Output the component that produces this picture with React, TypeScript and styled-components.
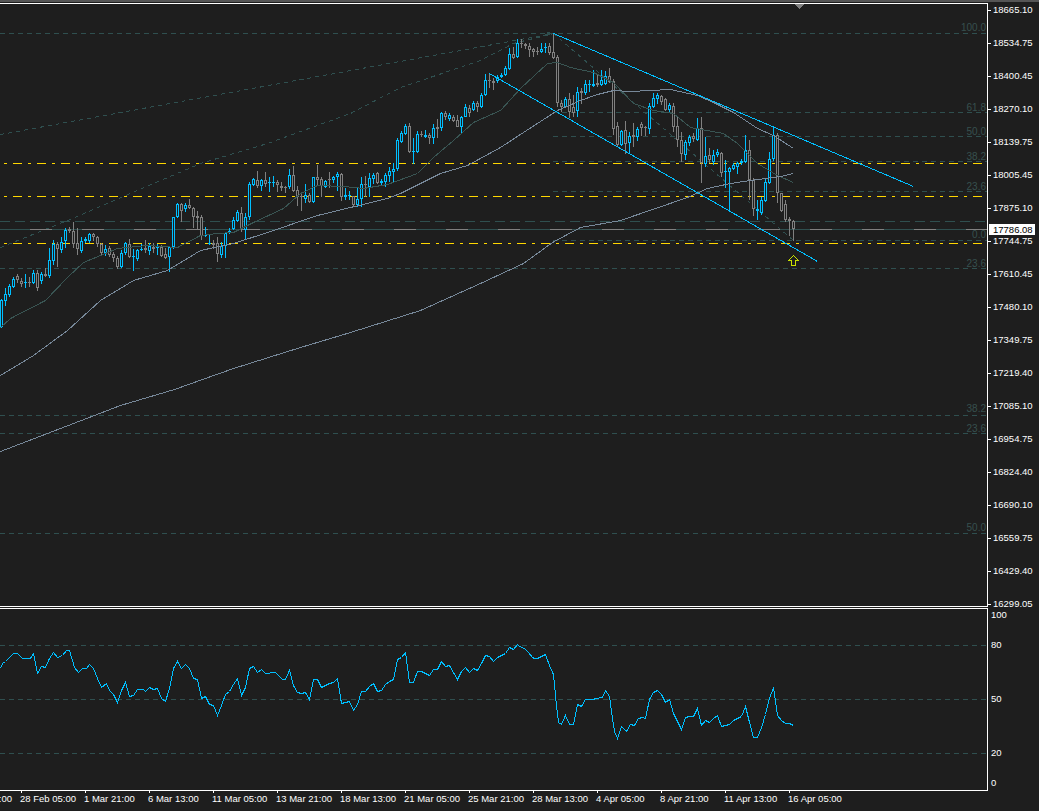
import styled, { createGlobalStyle } from 'styled-components';

const BG = '#1e1e1e';
const BLUE = '#00bfff';
const GRAY = '#808080';
const SLATE = '#778899';
const TEAL = '#2f4f4f';
const TEAL_MA = '#395553';
const YELLOW = '#ffd700';

type Candle = { x: number; up: boolean; top: number; bot: number; hi: number; lo: number };
type Row = [number, number, number, number, number];

// values read at 3x off the chart: [up, top, bottom, high, low]
const part1: Row[] = [
  [1,600,682,598,684],[1,583,602,565,618],[1,558,585,552,590],[1,538,560,530,565],[0,528,540,522,548],
  [0,542,552,535,560],[1,547,550,522,565],[0,547,549,530,562],[1,520,548,510,552],[0,518,565,510,573],
  [1,522,542,515,552],[0,522,527,505,530],[1,480,527,445,533],[1,432,482,420,495],[0,432,448,425,500],
  [1,427,450,410,458],[1,390,422,385,445],[0,388,392,382,400],[0,393,433,366,445],[0,430,446,385,465],
  [1,422,454,410,458],[1,418,422,412,430],[1,403,422,400,430],[0,403,412,400,422],[0,412,432,408,440],
  [0,432,458,428,465],[1,448,458,435,468],[0,445,465,438,470],[0,462,475,455,485],[0,475,500,468,507],
  [1,460,500,450,505],[1,430,460,425,465],[0,432,472,418,475],[1,468,471,448,512],[1,450,476,448,482],
  [1,447,450,432,453],[0,445,450,420,460],[1,438,452,430,466],[0,440,446,428,460],[1,442,445,432,465],
  [0,442,468,435,472],[0,463,473,445,477],[1,442,472,438,515],[1,352,442,350,447],[1,313,352,310,355],
  [0,313,332,310,365],[1,316,328,310,335],[0,316,325,298,326],[0,325,350,320,385],[0,349,355,333,388],
  [0,352,408,345,420],[1,404,408,382,412],[1,428,433,405,435],[0,428,434,420,448],[0,430,463,412,485],
  [1,438,464,425,473],[1,400,438,395,473],[1,392,400,385,403],[1,360,388,350,390],[1,337,362,330,365],
];
const part2: Row[] = [
  [0,460,510,442,515],[1,472,510,460,540],[1,372,472,365,480],[1,358,375,355,378],[0,360,378,333,385],
  [1,360,378,358,392],[0,360,372,335,382],[1,367,370,350,395],[1,366,368,347,380],[0,367,375,360,395],
  [0,378,384,365,392],[0,381,383,378,400],[1,346,382,328,388],[0,346,392,318,395],[0,390,410,378,438],
  [0,408,411,398,452],[1,406,418,372,430],[0,405,425,398,428],[1,352,425,350,428],[0,352,360,315,378],
  [0,358,378,350,410],[1,364,380,360,384],[0,358,360,337,384],[1,352,360,348,370],[1,342,352,335,392],
  [0,342,410,338,422],[1,406,412,385,420],[1,406,408,392,420],[0,408,435,408,442],[1,418,436,380,440],
  [1,373,418,350,440],[0,372,376,348,412],[1,355,380,340,412],[1,345,358,338,372],[0,340,368,335,372],
  [1,363,370,358,375],[1,345,365,338,382],[1,334,347,320,365],[1,328,335,310,365],[1,240,328,235,332],
  [1,220,245,212,250],[1,198,222,192,225],[0,198,275,190,280],[1,272,275,235,312],[1,222,275,212,280],
  [0,222,226,212,232],[1,226,232,210,235],[0,226,233,218,252],[1,205,233,192,252],[0,202,208,178,234],
  [1,160,205,155,212],[0,160,172,152,180],[1,165,177,160,182],[0,170,182,165,186],[0,180,200,165,202],
  [1,170,200,168,218],[1,142,170,132,172],[0,143,158,135,172],[1,130,150,122,152],[0,130,140,122,155],
];
const part3: Row[] = [
  [1,286,320,280,325],[1,240,286,222,288],[0,240,242,218,265],[0,242,250,235,270],[1,230,242,225,248],
  [1,225,232,218,235],[1,205,225,198,228],[1,162,207,143,210],[0,162,175,140,178],[1,130,172,118,175],
  [0,130,133,118,145],[0,133,138,128,148],[0,138,150,130,172],[0,148,155,143,170],[0,153,156,142,165],
  [1,148,156,130,160],[1,140,143,130,158],[0,138,160,130,165],[0,157,174,98,178],[0,172,308,165,322],
  [0,308,322,300,335],[1,296,322,292,325],[0,298,335,280,355],[0,322,338,285,350],[1,275,332,262,352],
  [0,272,280,265,312],[1,252,280,240,285],[1,252,255,240,275],[1,252,257,210,262],[0,250,254,225,262],
  [1,240,256,210,258],[1,228,252,212,255],[0,228,245,205,250],[0,243,388,238,405],[0,378,436,365,442],
  [1,394,436,390,438],[0,390,432,362,462],[1,407,430,395,460],[0,405,410,368,440],[1,388,412,380,422],
  [0,372,385,365,408],[0,382,384,378,408],[1,318,386,310,402],[1,294,322,280,325],[1,286,297,280,312],
  [0,287,306,285,315],[0,298,330,295,332],[1,315,330,310,335],[0,318,380,310,395],[0,378,420,350,440],
  [0,420,462,395,485],[1,425,465,420,480],[1,412,428,405,438],[0,408,418,400,425],[1,385,420,355,424],
  [0,384,490,350,548],[1,468,492,412,500],[0,466,480,445,488],[1,465,486,450,495],[1,456,466,448,470],
  [0,458,518,455,530],[1,514,517,480,565],[1,505,515,500,635],[1,495,507,488,510],[1,490,500,485,522],
  [1,482,490,478,495],[1,450,485,405,490],[0,450,540,420,600],[0,540,628,535,648],[1,628,632,600,660],
  [1,600,640,590,645],[1,547,602,535,605],[1,478,548,455,552],[1,405,478,380,482],[0,404,580,400,608],
  [0,580,632,578,635],[0,613,660,600,665],[0,658,662,652,708],[0,664,688,660,722],
];

const toPx = (offset: number, rows: Row[]) =>
  rows.map(([up, top, bot, hi, lo]) => ({
    up: up === 1,
    top: Math.round(offset + top / 3),
    bot: Math.round(offset + bot / 3),
    hi: Math.round(offset + hi / 3),
    lo: Math.round(offset + lo / 3),
  }));

const candles: Candle[] = [...toPx(100, part1), ...toPx(60, part2), ...toPx(0, part3)].map((c, i) => ({
  ...c,
  x: 1 + i * 4,
}));

const pts = (list: number[][]) => list.map(([x, y]) => `${x + 0.5},${y + 0.5}`).join(' ');

const ma200 = [[0,451],[60,428],[120,405],[174,389],[233,368],[300,347],[350,332],[420,310],[480,283],[523,263],[552,242],[580,227],[620,220],[687,197],[707,188],[730,183],[750,180],[780,176],[793,173]];
const ma50 = [[0,375],[33,355],[67,330],[100,300],[133,280],[167,270],[200,250],[233,243],[267,232],[317,215],[350,207],[387,198],[400,193],[440,173],[467,165],[500,147],[523,132],[557,110],[580,100],[597,94],[613,90],[630,91],[670,89],[697,95],[713,102],[733,112],[757,128],[773,135],[793,148]];
const ma20 = [[0,327],[10,318],[45,300],[67,277],[83,262],[117,248],[147,245],[177,247],[200,235],[217,233],[233,232],[253,222],[283,208],[300,193],[317,185],[343,186],[363,188],[387,184],[417,173],[433,157],[453,140],[473,122],[500,110],[520,88],[547,63],[557,62],[570,67],[593,72],[613,82],[633,103],[653,110],[673,113],[690,127],[723,133],[737,143],[757,163],[777,175],[793,182]];

const rsiLeft = [[0,205],[6,188],[15,182],[30,168],[40,160],[52,160],[65,175],[90,175],[100,160],[112,220],[122,197],[136,202],[148,175],[160,157],[172,172],[185,165],[197,150],[208,150],[222,200],[233,217],[245,203],[257,203],[268,193],[280,205],[292,235],[304,260],[318,250],[328,270],[340,282],[352,307],[364,270],[376,247],[388,288],[400,285],[412,268],[430,268],[436,272],[448,260],[460,267],[472,265],[484,295],[496,303],[508,265],[520,205],[532,182],[544,203],[556,193],[568,205],[580,235],[592,238],[604,295],[616,288],[628,312],[640,316],[652,344],[664,315],[676,282],[688,272],[700,253],[712,235],[724,285],[736,260],[748,203],[760,198],[772,217],[784,208],[796,220],[825,217],[845,236],[856,236],[868,210],[880,255],[892,275],[904,280],[916,277],[928,297],[940,238],[952,238],[964,262],[976,255],[988,250],[1000,245],[1012,235],[1024,310],[1036,306],[1046,303],[1060,330],[1072,312],[1084,272],[1096,273],[1108,258],[1120,248],[1132,272],[1144,270],[1156,252],[1168,242],[1180,238],[1192,178],[1204,170],[1216,157],[1228,245],[1240,245],[1252,214],[1264,214],[1288,224],[1300,208],[1312,208],[1324,182],[1336,198],[1348,196],[1360,215],[1372,238],[1384,214],[1396,200],[1408,217],[1420,203],[1432,210],[1444,188],[1456,165],[1468,168],[1480,182],[1492,170],[1504,165],[1516,158],[1528,140],[1540,147],[1552,133]];
const rsiRight = [[0,137],[14,143],[26,155],[38,170],[44,175],[55,175],[78,162],[90,195],[102,222],[110,315],[116,365],[126,372],[138,346],[150,372],[162,372],[174,313],[186,318],[198,296],[220,296],[230,293],[248,291],[258,270],[270,287],[278,355],[285,393],[295,415],[307,377],[320,393],[332,372],[344,376],[356,353],[368,351],[378,355],[390,298],[402,275],[414,270],[426,282],[438,307],[450,296],[462,340],[474,362],[486,388],[498,352],[510,347],[522,347],[535,323],[547,375],[559,361],[571,367],[583,355],[595,346],[607,379],[619,376],[631,371],[643,360],[655,353],[667,347],[679,318],[691,365],[703,412],[715,410],[727,380],[739,342],[751,295],[763,262],[775,345],[787,360],[799,369],[811,370],[821,376]];
const rsi = [
  ...rsiLeft.map(([x, y]) => [Math.round(x / 3), Math.round(600 + y / 3)]),
  ...rsiRight.map(([x, y]) => [Math.round(519 + x / 3), Math.round(600 + y / 3)]),
];

const fibRows = [
  { y: 33, from: 0 }, { y: 112, from: 553 }, { y: 136, from: 553 }, { y: 161, from: 553 }, { y: 191, from: 553 },
  { y: 240, from: 553 }, { y: 268, from: 0 }, { y: 415, from: 0 }, { y: 433, from: 0 }, { y: 533, from: 0 },
];
const fibTexts = [
  { y: 31, t: '100.0' }, { y: 111, t: '61.8' }, { y: 135, t: '50.0' }, { y: 160, t: '38.2' }, { y: 190, t: '23.6' },
  { y: 238, t: '0.0' }, { y: 267, t: '23.6' }, { y: 412, t: '38.2' }, { y: 432, t: '23.6' }, { y: 531, t: '50.0' },
];
const prices = [
  '18665.10','18534.75','18400.45','18270.10','18139.75','18005.45','17875.10','17744.75','17610.45','17480.10',
  '17349.75','17219.40','17085.10','16954.75','16824.40','16690.10','16559.75','16429.40','16299.05',
];
const rsiScale = [
  { t: '100', gap: 0 }, { t: '80', gap: 20 }, { t: '50', gap: 44 }, { t: '20', gap: 44 }, { t: '0', gap: 20 },
];
const dates = [
  '26 Feb 13:00','28 Feb 05:00','1 Mar 21:00','6 Mar 13:00','11 Mar 05:00','13 Mar 21:00','18 Mar 13:00',
  '21 Mar 05:00','25 Mar 21:00','28 Mar 13:00','4 Apr 05:00','8 Apr 21:00','11 Apr 13:00','16 Apr 05:00',
];

const Page = createGlobalStyle`
  html, body { margin: 0; padding: 0; background: ${BG}; }
  body { font-family: "Liberation Sans", Arial, sans-serif; }
`;
const Terminal = styled.div`
  width: 1039px;
  height: 811px;
  display: grid;
  grid-template-columns: 988px 51px;
  grid-template-rows: 604px 184px 20px;
  border-top: 2px solid #555;
  padding-top: 1px;
  box-sizing: border-box;
  background: ${BG};
  overflow: hidden;
  color: #fff;
  font-size: 9.5px;
`;
const MainPane = styled.div`
  border: 1px solid #fff;
  border-left: 0;
  height: 604px;
  box-sizing: border-box;
`;
const SubPane = styled.div`
  border: 1px solid #fff;
  border-left: 0;
  margin-top: 1px;
  height: 183px;
  box-sizing: border-box;
`;
const Plot = styled.svg`
  display: block;
  shape-rendering: crispEdges;
`;
const PriceAxis = styled.div`
  position: relative;
  height: 606px;
  padding: 2px 0 0 5px;
  box-sizing: border-box;
  display: flex;
  flex-direction: column;
  justify-content: space-between;
`;
const ScaleAxis = styled.div`
  padding: 3px 0 0 3px;
  display: flex;
  flex-direction: column;
`;
const AxisLabel = styled.div<{ $gap?: number; $tick?: boolean }>`
  position: relative;
  height: 10px;
  line-height: 10px;
  margin-top: ${(p) => p.$gap ?? 0}px;
  white-space: nowrap;
  &::before {
    content: ${(p) => (p.$tick === false ? 'none' : "''")};
    position: absolute;
    left: -5px;
    top: 5px;
    width: 3px;
    height: 1px;
    background: #fff;
  }
`;
const LastPrice = styled.div`
  position: absolute;
  left: 1px;
  top: 221px;
  width: 46px;
  height: 11px;
  padding-left: 4px;
  box-sizing: border-box;
  line-height: 11px;
  background: #fff;
  color: #000;
`;
const TimeBar = styled.div`
  grid-column: 1 / -1;
  overflow: hidden;
`;
const TimeRow = styled.div`
  display: flex;
  margin-left: -44px;
`;
const TimeCell = styled.div`
  position: relative;
  flex: 0 0 64px;
  line-height: 16px;
  white-space: nowrap;
  &::before {
    content: '';
    position: absolute;
    left: 1px;
    top: -1px;
    width: 1px;
    height: 3px;
    background: #fff;
  }
`;
const Rule = styled.line<{ $color: string; $dash?: string }>`
  stroke: ${(p) => p.$color};
  stroke-width: 1;
  stroke-dasharray: ${(p) => p.$dash ?? 'none'};
`;
const Trace = styled.polyline<{ $color: string; $dash?: string }>`
  fill: none;
  stroke: ${(p) => p.$color};
  stroke-width: 1;
  stroke-dasharray: ${(p) => p.$dash ?? 'none'};
`;
const FibText = styled.text`
  font-family: "Liberation Sans", Arial, sans-serif;
  font-size: 10px;
  fill: #37504e;
  text-anchor: end;
`;

function CandleMark({ c }: { c: Candle }) {
  const color = c.up ? BLUE : GRAY;
  const h = Math.max(c.bot - c.top, 1);
  return (
    <g>
      <rect x={c.x} y={c.hi} width={1} height={c.lo - c.hi} fill={color} />
      <rect x={c.x - 1} y={c.top} width={3} height={h} fill={color} />
      {h >= 3 && <rect x={c.x} y={c.top + 1} width={1} height={h - 2} fill={BG} />}
    </g>
  );
}

function PriceChart() {
  return (
    <Plot width={987} height={602} viewBox="0 4 987 602">
      {fibRows.map((r) => (
        <Rule key={r.y} x1={r.from} x2={987} y1={r.y + 0.5} y2={r.y + 0.5} $color={TEAL} $dash="5 4" />
      ))}
      <Rule x1={0} x2={987} y1={221.5} y2={221.5} $color={TEAL} $dash="10 5" />
      <Trace points={pts([[0,134],[553,33]])} $color={TEAL} $dash="4 4" />
      <Trace points={pts([[0,247],[67,220],[200,163],[267,143],[350,113],[400,87],[480,60],[513,43],[553,33]])} $color={TEAL} $dash="4 4" />
      <Trace points={pts([[553,33],[793,240]])} $color={TEAL} $dash="4 4" />
      <rect x={547} y={32} width={3} height={3} fill={TEAL} />
      {fibTexts.map((f) => (
        <FibText key={f.y} x={986} y={f.y}>
          {f.t}
        </FibText>
      ))}
      {[163, 196, 243].map((y) => (
        <Rule key={y} x1={4} x2={983} y1={y + 0.5} y2={y + 0.5} $color={YELLOW} $dash="3 6 9 6" />
      ))}
      <Rule x1={0} x2={987} y1={229.5} y2={229.5} $color={GRAY} />
      <Rule x1={0} x2={987} y1={229.5} y2={229.5} $color={TEAL} $dash="30 22" />
      {candles.map((c) => (
        <CandleMark key={c.x} c={c} />
      ))}
      <Trace points={pts(ma20)} $color={TEAL_MA} />
      <Trace points={pts(ma50)} $color={SLATE} />
      <Trace points={pts(ma200)} $color={SLATE} />
      <Trace points={pts([[553,33],[913,186]])} $color={BLUE} />
      <Trace points={pts([[489,73],[817,261]])} $color={BLUE} />
      <polygon
        points="793.5,255.5 798.5,260.5 795.5,260.5 795.5,265.5 791.5,265.5 791.5,260.5 788.5,260.5"
        fill="none"
        stroke="#c8e000"
      />
      <polygon points="794,4 804,4 799,9" fill={GRAY} />
    </Plot>
  );
}

function RsiChart() {
  return (
    <Plot width={987} height={181} viewBox="0 609 987 181">
      {[645, 699, 753].map((y) => (
        <Rule key={y} x1={0} x2={987} y1={y + 0.5} y2={y + 0.5} $color={TEAL} $dash="5 4" />
      ))}
      <Trace points={pts(rsi)} $color={BLUE} />
    </Plot>
  );
}

export default function App() {
  return (
    <>
      <Page />
      <Terminal>
        <MainPane>
          <PriceChart />
        </MainPane>
        <PriceAxis>
          {prices.map((p) => (
            <AxisLabel key={p}>{p}</AxisLabel>
          ))}
          <LastPrice>17786.08</LastPrice>
        </PriceAxis>
        <SubPane>
          <RsiChart />
        </SubPane>
        <ScaleAxis>
          {rsiScale.map((s) => (
            <AxisLabel key={s.t} $gap={s.gap} $tick={false}>
              {s.t}
            </AxisLabel>
          ))}
        </ScaleAxis>
        <TimeBar>
          <TimeRow>
            {dates.map((d) => (
              <TimeCell key={d}>{d}</TimeCell>
            ))}
          </TimeRow>
        </TimeBar>
      </Terminal>
    </>
  );
}
